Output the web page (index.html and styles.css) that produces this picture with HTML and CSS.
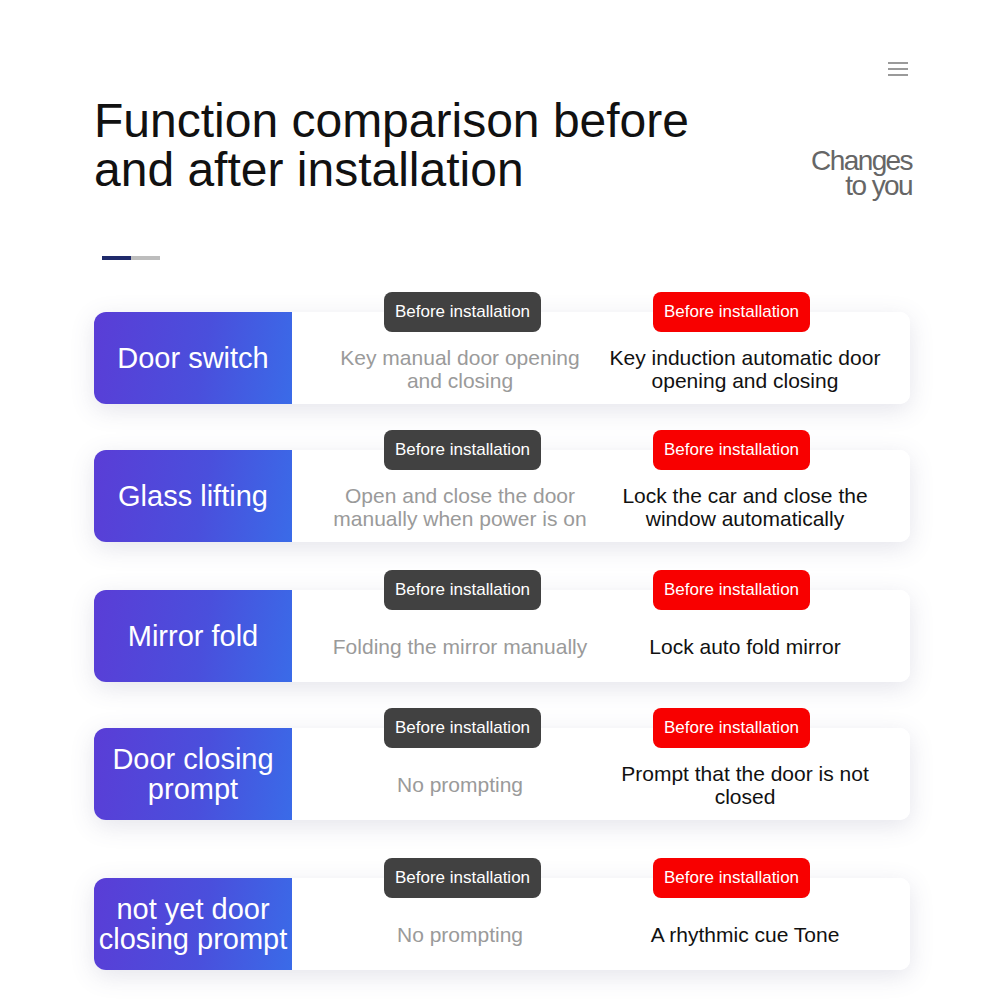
FILE: index.html
```html
<!DOCTYPE html>
<html lang="en">
<head>
<meta charset="utf-8">
<title>Function comparison</title>
<link rel="stylesheet" href="styles.css">
</head>
<body>
<div class="page">
  <header class="header">
    <h1 class="title">Function comparison before<br>and after installation</h1>
    <div class="side">
      <div class="menu"><span></span><span></span><span></span></div>
      <div class="slogan">Changes<br>to you</div>
    </div>
  </header>
  <div class="indicator"><span class="on"></span><span class="off"></span></div>

  <section class="rows">
    <div class="row">
      <div class="label">Door switch</div>
      <div class="cells">
        <div class="cell before">Key manual door opening<br>and closing</div>
        <div class="cell after">Key induction automatic door<br>opening and closing</div>
      </div>
      <span class="badge dark">Before installation</span>
      <span class="badge red">Before installation</span>
    </div>
    <div class="row">
      <div class="label">Glass lifting</div>
      <div class="cells">
        <div class="cell before">Open and close the door<br>manually when power is on</div>
        <div class="cell after">Lock the car and close the<br>window automatically</div>
      </div>
      <span class="badge dark">Before installation</span>
      <span class="badge red">Before installation</span>
    </div>
    <div class="row">
      <div class="label">Mirror fold</div>
      <div class="cells">
        <div class="cell before">Folding the mirror manually</div>
        <div class="cell after">Lock auto fold mirror</div>
      </div>
      <span class="badge dark">Before installation</span>
      <span class="badge red">Before installation</span>
    </div>
    <div class="row">
      <div class="label">Door closing<br>prompt</div>
      <div class="cells">
        <div class="cell before">No prompting</div>
        <div class="cell after">Prompt that the door is not<br>closed</div>
      </div>
      <span class="badge dark">Before installation</span>
      <span class="badge red">Before installation</span>
    </div>
    <div class="row">
      <div class="label">not yet door<br>closing prompt</div>
      <div class="cells">
        <div class="cell before">No prompting</div>
        <div class="cell after">A rhythmic cue Tone</div>
      </div>
      <span class="badge dark">Before installation</span>
      <span class="badge red">Before installation</span>
    </div>
  </section>
</div>
</body>
</html>
```

FILE: styles.css
```css
html, body {
  margin: 0;
  padding: 0;
  background: #ffffff;
}
body {
  font-family: "Liberation Sans", Arial, sans-serif;
  color: #111;
}
.page {
  width: 1000px;
  height: 1000px;
  overflow: hidden;
  padding: 62px 88px 0 94px;
  box-sizing: border-box;
}
.header {
  display: flex;
  justify-content: space-between;
  align-items: flex-start;
}
.title {
  margin: 34px 0 0 0;
  font-size: 48px;
  line-height: 49px;
  font-weight: normal;
  color: #111;
}
.side {
  display: flex;
  flex-direction: column;
  align-items: flex-end;
}
.menu {
  width: 20px;
  height: 14px;
  margin-right: 4px;
  display: flex;
  flex-direction: column;
  justify-content: space-between;
}
.menu span {
  display: block;
  height: 2px;
  background: #9a9a9a;
}
.slogan {
  margin-top: 72px;
  font-size: 28px;
  line-height: 25px;
  letter-spacing: -1.6px;
  color: #666;
  text-align: right;
}
.indicator {
  display: flex;
  margin: 58px 0 0 8px;
  height: 4px;
}
.indicator .on {
  width: 29px;
  background: #1f2a6b;
}
.indicator .off {
  width: 29px;
  background: #bdbdbd;
}
.rows {
  margin-top: 52px;
  width: 816px;
}
.row {
  position: relative;
  display: flex;
  height: 92px;
  margin-top: 46px;
  border-radius: 12px 10px 10px 12px;
  box-shadow: 0 6px 24px rgba(90, 88, 130, 0.16);
}
.row:first-child { margin-top: 0; }
.row:nth-child(3) { margin-top: 48px; }
.row:nth-child(5) { margin-top: 58px; }
.label {
  width: 198px;
  flex: none;
  display: flex;
  align-items: center;
  justify-content: center;
  text-align: center;
  color: #fff;
  font-size: 29px;
  line-height: 30px;
  border-radius: 12px 0 0 12px;
  background: linear-gradient(100deg, #5a3dd6 0%, #4a4fdc 55%, #3a6be8 100%);
}
.cells {
  flex: 1;
  display: grid;
  grid-template-columns: 280px 290px;
  padding: 21px 0 0 28px;
  background: #fff;
  border-radius: 0 10px 10px 0;
}
.cell {
  display: flex;
  align-items: center;
  justify-content: center;
  text-align: center;
  font-size: 21px;
  line-height: 23px;
  white-space: nowrap;
}
.cell.before { color: #9a9a9a; }
.cell.after { color: #111; }
.badge {
  position: absolute;
  top: -20px;
  width: 157px;
  height: 40px;
  border-radius: 8px;
  color: #fff;
  font-size: 17px;
  line-height: 40px;
  text-align: center;
}
.badge.dark {
  left: 290px;
  background: #414141;
}
.badge.red {
  left: 559px;
  background: #f80000;
}
```
